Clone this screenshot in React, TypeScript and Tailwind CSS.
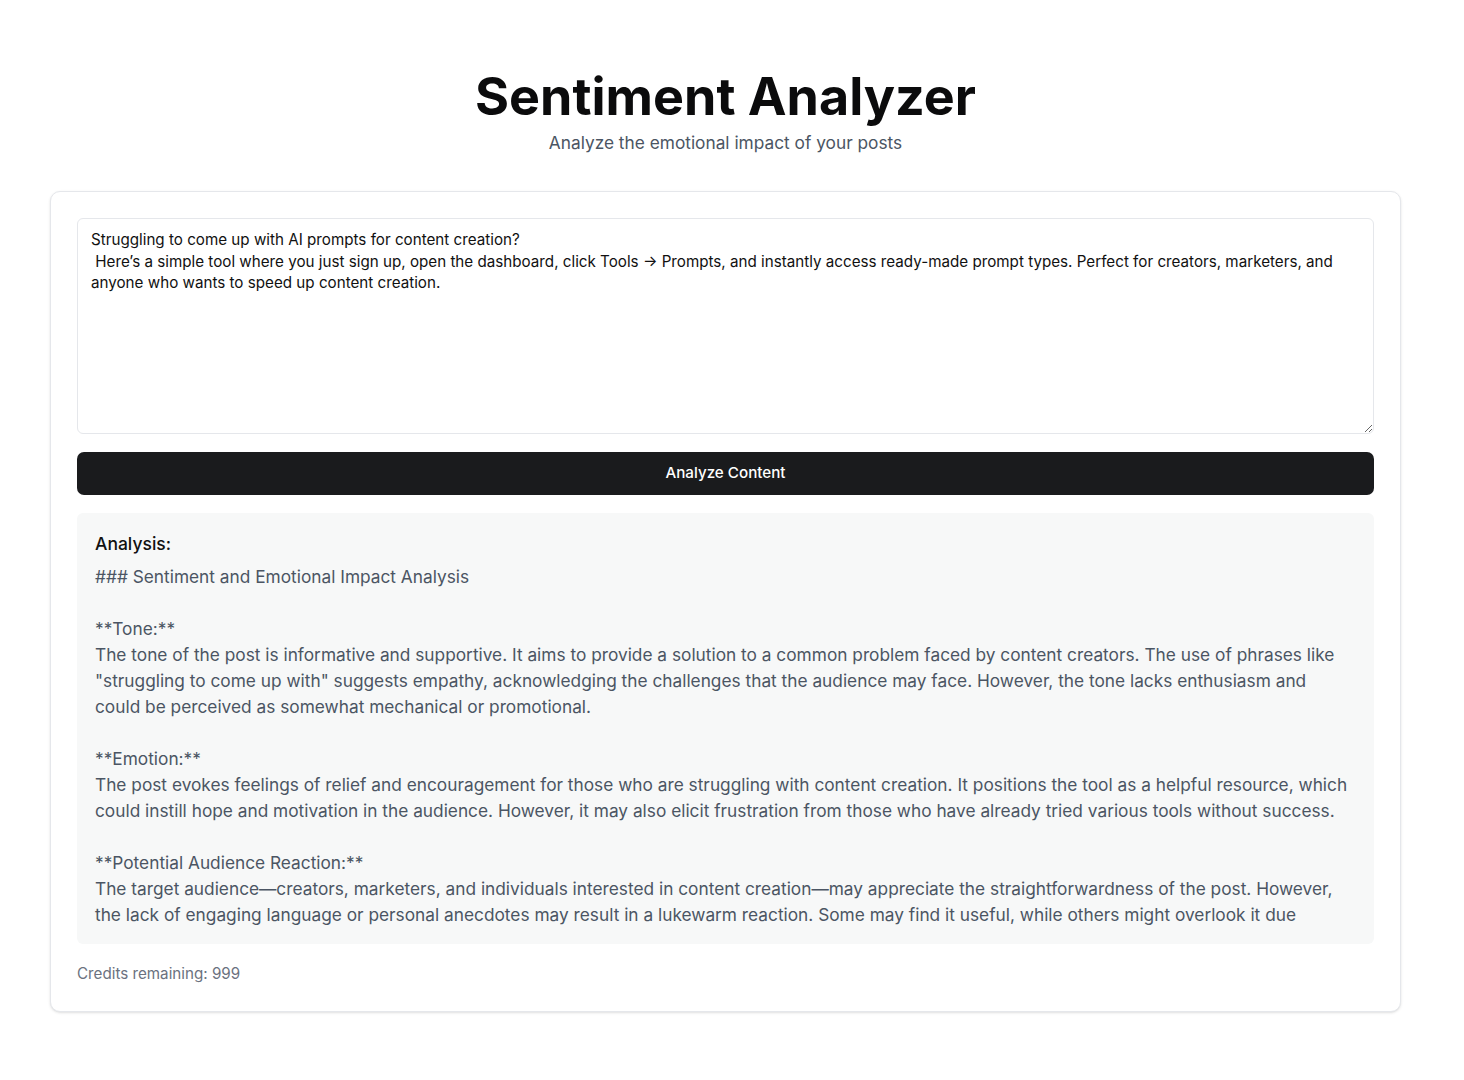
const inputText = `Struggling to come up with AI prompts for content creation?
 Here’s a simple tool where you just sign up, open the dashboard, click Tools → Prompts, and instantly access ready-made prompt types. Perfect for creators, marketers, and anyone who wants to speed up content creation.`;

const analysis = `### Sentiment and Emotional Impact Analysis

**Tone:**
The tone of the post is informative and supportive. It aims to provide a solution to a common problem faced by content creators. The use of phrases like "struggling to come up with" suggests empathy, acknowledging the challenges that the audience may face. However, the tone lacks enthusiasm and could be perceived as somewhat mechanical or promotional.

**Emotion:**
The post evokes feelings of relief and encouragement for those who are struggling with content creation. It positions the tool as a helpful resource, which could instill hope and motivation in the audience. However, it may also elicit frustration from those who have already tried various tools without success.

**Potential Audience Reaction:**
The target audience—creators, marketers, and individuals interested in content creation—may appreciate the straightforwardness of the post. However, the lack of engaging language or personal anecdotes may result in a lukewarm reaction. Some may find it useful, while others might overlook it due`;

export default function App() {
  return (
    <div className="min-h-screen bg-white font-['Inter',sans-serif] text-gray-900">
      <div className="ml-[50px] w-[1351px] pt-[66px]">
        {/* Header */}
        <div className="text-center">
          <h1 className="text-[52px] leading-[62px] font-bold text-[#0b0b0c]">Sentiment Analyzer</h1>
          <p className="mt-[3px] text-[17.3px] leading-[24px] text-[#4b5563]">
            Analyze the emotional impact of your posts
          </p>
        </div>

        {/* Card */}
        <div className="mt-[36px] rounded-[10px] border border-[#e5e7eb] bg-white px-[26px] pt-[26px] pb-[27px] shadow-sm">
          <textarea
            defaultValue={inputText}
            className="block h-[216px] w-full resize-y rounded-[6px] border border-[#e5e7eb] px-[13px] py-[10px] text-[15.2px] leading-[21.5px] text-[#111] focus:outline-none"
          />

          <button className="mt-[18px] block h-[43px] w-full rounded-[7px] bg-[#1a1b1d] text-[15.2px] font-medium text-white">
            Analyze Content
          </button>

          {/* Result */}
          <div className="mt-[18px] rounded-[6px] bg-[#f7f8f8] px-[18px] pt-[19px] pb-[16px]">
            <h3 className="text-[17.5px] leading-[24px] font-medium text-[#111]">Analysis:</h3>
            <p className="mt-[8px] whitespace-pre-wrap text-[17.3px] leading-[26px] text-[#4b5563]">{analysis}</p>
          </div>

          <p className="mt-[20px] text-[15.2px] leading-[20px] text-[#6b7280]">Credits remaining: 999</p>
        </div>
      </div>
    </div>
  );
}
